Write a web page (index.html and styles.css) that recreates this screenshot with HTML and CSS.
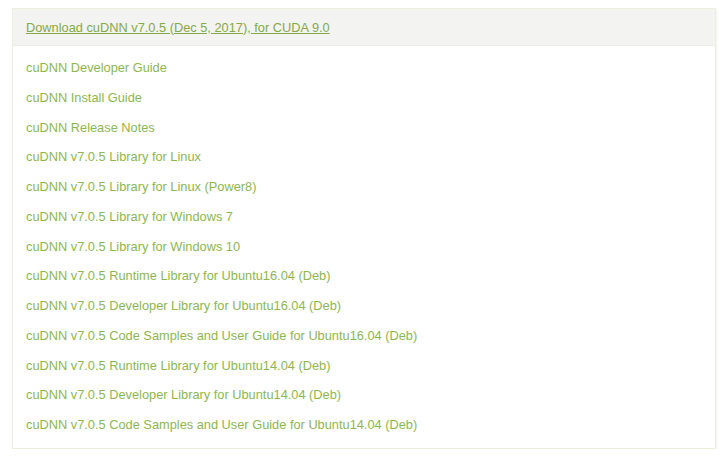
FILE: index.html
```html
<!DOCTYPE html>
<html>
<head>
<meta charset="utf-8">
<link rel="stylesheet" href="styles.css">
</head>
<body>
<div class="panel">
  <div class="panel-head">
    <a class="head-link" href="#">Download cuDNN v7.0.5 (Dec 5, 2017), for CUDA 9.0</a>
  </div>
  <ul class="links">
    <li><a href="#">cuDNN Developer Guide</a></li>
    <li><a href="#">cuDNN Install Guide</a></li>
    <li><a href="#">cuDNN Release Notes</a></li>
    <li><a href="#">cuDNN v7.0.5 Library for Linux</a></li>
    <li><a href="#">cuDNN v7.0.5 Library for Linux (Power8)</a></li>
    <li><a href="#">cuDNN v7.0.5 Library for Windows 7</a></li>
    <li><a href="#">cuDNN v7.0.5 Library for Windows 10</a></li>
    <li><a href="#">cuDNN v7.0.5 Runtime Library for Ubuntu16.04 (Deb)</a></li>
    <li><a href="#">cuDNN v7.0.5 Developer Library for Ubuntu16.04 (Deb)</a></li>
    <li><a href="#">cuDNN v7.0.5 Code Samples and User Guide for Ubuntu16.04 (Deb)</a></li>
    <li><a href="#">cuDNN v7.0.5 Runtime Library for Ubuntu14.04 (Deb)</a></li>
    <li><a href="#">cuDNN v7.0.5 Developer Library for Ubuntu14.04 (Deb)</a></li>
    <li><a href="#">cuDNN v7.0.5 Code Samples and User Guide for Ubuntu14.04 (Deb)</a></li>
  </ul>
</div>
</body>
</html>
```
FILE: styles.css
```css
html, body {
  margin: 0;
  padding: 0;
  background: #ffffff;
}
body {
  padding: 8px 4px 0 12px;
  font-family: "Liberation Sans", Arial, sans-serif;
}
.panel {
  width: 704px;
  height: 441px;
  box-sizing: border-box;
  border: 1px solid #ecefde;
  box-shadow: 1px 1px 2px rgba(0,0,0,0.06);
  background: #fff;
}
.panel-head {
  height: 36px;
  background: #f3f3f1;
  border-bottom: 1px solid #ecece6;
  padding: 0 13px;
  display: flex;
  align-items: center;
}
.head-link {
  color: #86a94a;
  font-size: 12.8px;
  text-decoration: underline;
}
.links {
  list-style: none;
  margin: 0;
  padding: 13px 13px 0;
}
.links li {
  height: 29.75px;
  line-height: 16px;
}
.links a {
  color: #8db64f;
  font-size: 12.8px;
  text-decoration: none;
}
```
